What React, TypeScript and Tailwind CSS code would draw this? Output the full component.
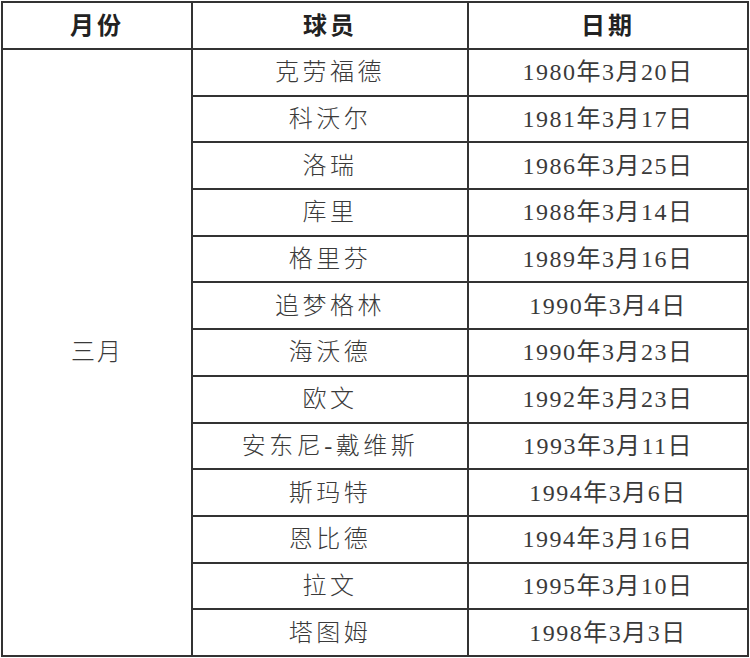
const rows: [string, string][] = [
  ['克劳福德', '1980年3月20日'],
  ['科沃尔', '1981年3月17日'],
  ['洛瑞', '1986年3月25日'],
  ['库里', '1988年3月14日'],
  ['格里芬', '1989年3月16日'],
  ['追梦格林', '1990年3月4日'],
  ['海沃德', '1990年3月23日'],
  ['欧文', '1992年3月23日'],
  ['安东尼-戴维斯', '1993年3月11日'],
  ['斯玛特', '1994年3月6日'],
  ['恩比德', '1994年3月16日'],
  ['拉文', '1995年3月10日'],
  ['塔图姆', '1998年3月3日'],
];

const font = { fontFamily: '"Liberation Serif", "Noto Sans CJK SC", serif' };

export default function App() {
  return (
    <div className="h-[658px] w-[750px] bg-white pl-[1px] pt-[1px]" style={font}>
      <table className="w-[748px] table-fixed border-collapse border-2 border-[#333] text-[24px] text-[#3a3a3a]">
        <colgroup>
          <col className="w-[190px]" />
          <col className="w-[276px]" />
          <col />
        </colgroup>
        <thead>
          <tr className="h-[47px]">
            {['月份', '球员', '日期'].map((h) => (
              <th
                key={h}
                className="border-2 border-[#333] p-0 text-center font-bold tracking-[3px] text-[#222]"
              >
                {h}
              </th>
            ))}
          </tr>
        </thead>
        <tbody>
          {rows.map(([name, date], i) => (
            <tr key={name} className="h-[46.7px]">
              {i === 0 ? (
                <td
                  rowSpan={rows.length}
                  className="border-2 border-[#333] p-0 text-center font-light tracking-[2px]"
                >
                  三月
                </td>
              ) : null}
              <td className="border-2 border-[#333] p-0 text-center font-light leading-none tracking-[3.5px]">
                {name}
              </td>
              <td className="border-2 border-[#333] p-0 text-center leading-none tracking-[1.5px]">
                {date}
              </td>
            </tr>
          ))}
        </tbody>
      </table>
    </div>
  );
}
